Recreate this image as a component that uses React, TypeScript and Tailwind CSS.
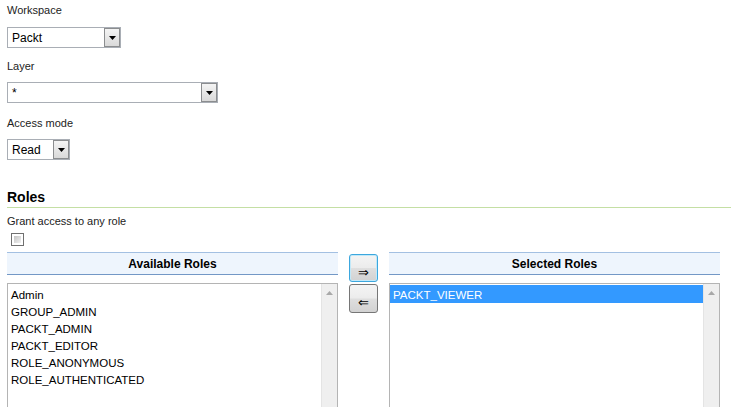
import React from "react";

const availableRoles = [
  "Admin",
  "GROUP_ADMIN",
  "PACKT_ADMIN",
  "PACKT_EDITOR",
  "ROLE_ANONYMOUS",
  "ROLE_AUTHENTICATED",
];

const selectedRoles = ["PACKT_VIEWER"];

function DropDown({ value, className }: { value: string; className: string }) {
  return (
    <div className={`flex h-[21px] items-stretch border border-[#a9aeb5] bg-white ${className}`}>
      <span className="flex flex-1 items-center pl-[4px] text-[12px] text-black">{value}</span>
      <span className="flex w-[16px] items-center justify-center border border-[#8b8d8f] bg-[linear-gradient(to_bottom,#f4f4f4,#d9d9d9)]">
        <svg width="7" height="4" viewBox="0 0 7 4">
          <path d="M0 0H7L3.5 4Z" fill="#000" />
        </svg>
      </span>
    </div>
  );
}

function Field({ label, children, className }: { label: string; children: React.ReactNode; className: string }) {
  return (
    <div className={className}>
      <div className="h-[14px] text-[11px] leading-[14px] text-[#222]">{label}</div>
      {children}
    </div>
  );
}

function RoleList({ title, items, selected }: { title: string; items: string[]; selected?: string }) {
  return (
    <div className="w-[331px]">
      <div className="flex h-[23px] items-center justify-center border-t border-b border-t-[#a3c0e2] border-b-[#7398c6] bg-[#eef5fd] text-[12px] font-bold text-black">
        {title}
      </div>
      <div className="mt-[8px] flex h-[140px] border border-[#b4b4b4] bg-white">
        <div className="flex-1 pt-[1px]">
          {items.map((item) => (
            <div
              key={item}
              className={`pl-[3px] text-[11.5px] leading-[21px] ${
                item === selected ? "h-[18px] bg-[#3399ff] text-white" : "h-[17px] text-black"
              }`}
            >
              {item}
            </div>
          ))}
        </div>
        <div className="flex w-[16px] justify-center border-l border-[#e4e4e4] bg-[#efefef] pt-[7px]">
          <svg width="7" height="4" viewBox="0 0 7 4">
            <path d="M3.5 0L7 4H0Z" fill="#a8a8a8" />
          </svg>
        </div>
      </div>
    </div>
  );
}

function MoveButton({ glyph, focused, className }: { glyph: string; focused?: boolean; className: string }) {
  return (
    <div
      className={`flex w-[29px] items-center justify-center rounded-[3px] border pt-[8px] text-[13px] leading-none text-black bg-[linear-gradient(to_bottom,#f4f4f4_0%,#ececec_48%,#dedede_52%,#d2d2d2_100%)] ${
        focused ? "border-[#3ca7de] shadow-[inset_0_0_0_1px_#c2e8f8]" : "border-[#767676]"
      } ${className}`}
      style={{ fontFamily: '"DejaVu Sans", sans-serif' }}
    >
      {glyph}
    </div>
  );
}

export default function App() {
  return (
    <div
      className="h-[407px] w-[731px] overflow-hidden bg-white pl-[7px] pt-[3px]"
      style={{ fontFamily: '"Liberation Sans", Arial, sans-serif' }}
    >
      <Field label="Workspace" className="">
        <DropDown value="Packt" className="mt-[10px] w-[114px]" />
      </Field>
      <Field label="Layer" className="mt-[11px]">
        <DropDown value="*" className="mt-[9px] w-[211px]" />
      </Field>
      <Field label="Access mode" className="mt-[13px]">
        <DropDown value="Read" className="mt-[9px] w-[63px]" />
      </Field>

      <div className="mt-[29px] h-[19px] border-b border-[#c4dfa4] text-[14px] font-bold leading-[17px] text-black">
        Roles
      </div>
      <div className="mt-[6px] h-[14px] text-[11px] leading-[14px] text-[#222]">Grant access to any role</div>
      <div className="ml-[4px] mt-[5px] h-[13px] w-[13px] border border-[#707070] bg-white p-[2px]">
        <div className="h-full w-full bg-[linear-gradient(135deg,#c4c4c4,#f2f2f2)]" />
      </div>

      <div className="mt-[6px] flex items-start">
        <RoleList title="Available Roles" items={availableRoles} />
        <div className="ml-[11px] mt-[2px] flex flex-col gap-[2px]">
          <MoveButton glyph="⇒" focused className="h-[28px]" />
          <MoveButton glyph="⇐" className="h-[29px]" />
        </div>
        <div className="ml-[11px]">
          <RoleList title="Selected Roles" items={selectedRoles} selected="PACKT_VIEWER" />
        </div>
      </div>
    </div>
  );
}
